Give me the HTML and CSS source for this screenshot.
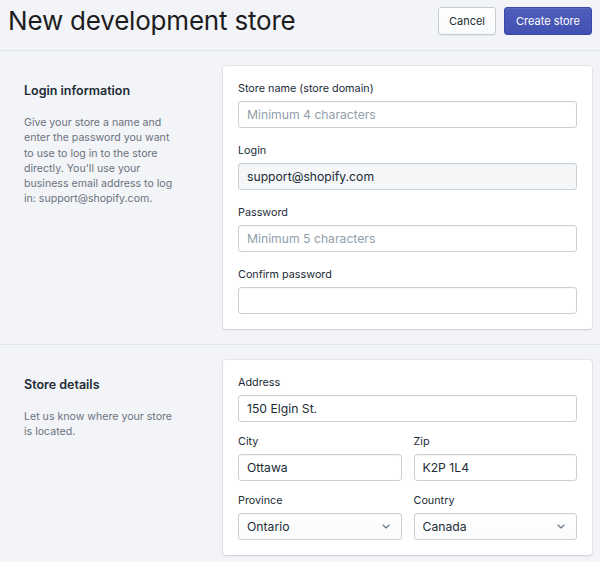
FILE: index.html
```html
<!DOCTYPE html>
<html lang="en">
<head>
<meta charset="utf-8">
<title>New development store</title>
<link rel="stylesheet" href="styles.css">
</head>
<body>
<header class="page-header">
  <h1 class="page-title">New development store</h1>
  <div class="actions">
    <button class="btn">Cancel</button>
    <button class="btn btn-primary">Create store</button>
  </div>
</header>

<section class="section">
  <div class="aside">
    <h2 class="aside-title">Login information</h2>
    <p class="aside-text">Give your store a name and enter the password you want to use to log in to the store directly. You'll use your business email address to log in: support@shopify.com.</p>
  </div>
  <div class="card card-login">
    <div class="field">
      <label class="label">Store name (store domain)</label>
      <input class="input" type="text" placeholder="Minimum 4 characters">
    </div>
    <div class="field">
      <label class="label">Login</label>
      <input class="input input-readonly" type="text" value="support@shopify.com" readonly>
    </div>
    <div class="field">
      <label class="label">Password</label>
      <input class="input" type="text" placeholder="Minimum 5 characters">
    </div>
    <div class="field">
      <label class="label">Confirm password</label>
      <input class="input" type="text">
    </div>
  </div>
</section>

<section class="section">
  <div class="aside">
    <h2 class="aside-title">Store details</h2>
    <p class="aside-text">Let us know where your store is located.</p>
  </div>
  <div class="card card-details">
    <div class="field">
      <label class="label">Address</label>
      <input class="input" type="text" value="150 Elgin St.">
    </div>
    <div class="row">
      <div class="field">
        <label class="label">City</label>
        <input class="input" type="text" value="Ottawa">
      </div>
      <div class="field">
        <label class="label">Zip</label>
        <input class="input" type="text" value="K2P 1L4">
      </div>
    </div>
    <div class="row">
      <div class="field">
        <label class="label">Province</label>
        <div class="select-wrap">
          <select class="input select"><option>Ontario</option></select>
          <svg class="chevron" width="8" height="5" viewBox="0 0 8 5"><path d="M1 1l3 3 3-3" fill="none" stroke="#637381" stroke-width="1.1" stroke-linecap="round" stroke-linejoin="round"/></svg>
        </div>
      </div>
      <div class="field">
        <label class="label">Country</label>
        <div class="select-wrap">
          <select class="input select"><option>Canada</option></select>
          <svg class="chevron" width="8" height="5" viewBox="0 0 8 5"><path d="M1 1l3 3 3-3" fill="none" stroke="#637381" stroke-width="1.1" stroke-linecap="round" stroke-linejoin="round"/></svg>
        </div>
      </div>
    </div>
  </div>
</section>
</body>
</html>
```

FILE: styles.css
```css
* { box-sizing: border-box; }

html, body {
  margin: 0;
  padding: 0;
  background: #f2f4f7;
  font-family: Inter, "Noto Sans", "Liberation Sans", sans-serif;
  color: #212b36;
}

.page-header {
  height: 51px;
  display: flex;
  align-items: center;
  justify-content: space-between;
  padding: 7px 8px 16px 8px;
  border-bottom: 1px solid #e1e4e8;
}

.page-title {
  margin: 0;
  font-size: 26px;
  line-height: 28px;
  font-weight: 400;
  letter-spacing: -0.2px;
  color: #1d1d1f;
}

.actions {
  display: flex;
  gap: 8px;
}

.btn {
  height: 28px;
  padding: 0 10px;
  border: 1px solid #c4cdd5;
  border-radius: 3px;
  background: linear-gradient(180deg, #ffffff, #f9fafb);
  box-shadow: 0 1px 0 0 rgba(22, 29, 37, 0.05);
  font-family: inherit;
  font-size: 11px;
  color: #212b36;
}

.btn-primary {
  padding: 0 11px;
  background: linear-gradient(180deg, #4f5dbb, #4352b2);
  border-color: #3a49a8;
  box-shadow: inset 0 1px 0 0 #5b69c2;
  color: #ffffff;
}

.section {
  display: flex;
  padding: 15px 8px 15px 24px;
  border-bottom: 1px solid #e1e4e8;
}

.aside {
  flex: none;
  width: 199px;
  padding-top: 17px;
}

.aside-title {
  margin: 0;
  font-size: 12.5px;
  line-height: 16px;
  font-weight: 600;
  color: #212b36;
}

.aside-text {
  width: 156px;
  margin: 16px 0 0;
  font-size: 10.6px;
  line-height: 15.3px;
  color: #6b7280;
}

.card {
  flex: 1;
  background: #ffffff;
  border-radius: 3px;
  box-shadow: 0 0 0 1px rgba(63, 63, 68, 0.06), 0 1px 2px 0 rgba(63, 63, 68, 0.15);
  padding: 15px;
  display: flex;
  flex-direction: column;
}

.card-login { gap: 15px; }
.card-details { gap: 12px; }

.row {
  display: flex;
  gap: 12px;
}

.row .field { flex: 1; min-width: 0; }

.field {
  display: flex;
  flex-direction: column;
}

.label {
  font-size: 10.8px;
  line-height: 16px;
  margin-bottom: 4px;
  color: #212b36;
}

.input {
  width: 100%;
  height: 27px;
  margin: 0;
  padding: 0 8px;
  border: 1px solid #c9d0d7;
  border-radius: 3px;
  background: #ffffff;
  box-shadow: inset 0 1px 0 0 rgba(99, 115, 129, 0.05);
  font-family: inherit;
  font-size: 12.2px;
  color: #212b36;
}

.input::placeholder { color: #919eab; }

.input-readonly { background: #f4f6f8; }

.select-wrap { position: relative; }

.select {
  appearance: none;
  -webkit-appearance: none;
  background: linear-gradient(180deg, #ffffff, #f9fafb);
}

.chevron {
  position: absolute;
  right: 12px;
  top: 11px;
  pointer-events: none;
}
```
